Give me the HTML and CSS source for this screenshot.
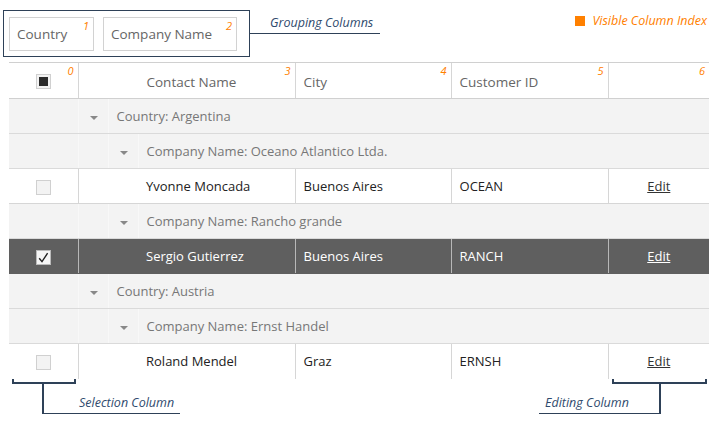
FILE: index.html
```html
<!DOCTYPE html>
<html>
<head>
<meta charset="utf-8">
<link rel="stylesheet" href="styles.css">
</head>
<body>
<div class="top">
  <div class="group-panel">
    <div class="group-item w1">Country<span class="idx">1</span></div>
    <div class="group-item w2">Company Name<span class="idx">2</span></div>
  </div>
  <div class="note-grouping">Grouping Columns</div>
  <div class="legend"><span class="legend-box"></span>Visible Column Index</div>
</div>
<table class="grid">
  <colgroup>
    <col class="c-sel"><col class="c-ind"><col class="c-ind"><col class="c-contact"><col class="c-city"><col class="c-cust"><col class="c-edit">
  </colgroup>
  <thead>
    <tr>
      <th class="sel"><span class="cb cb-ind"><span class="ind-mark"></span></span><span class="idx">0</span></th>
      <th colspan="3" class="hdr contact">Contact Name<span class="idx">3</span></th>
      <th class="hdr">City<span class="idx">4</span></th>
      <th class="hdr">Customer ID<span class="idx">5</span></th>
      <th class="hdr"><span class="idx">6</span></th>
    </tr>
  </thead>
  <tbody>
    <tr class="grp">
      <td></td>
      <td class="arrow-cell"><span class="arrow"></span></td>
      <td colspan="5" class="grp-text">Country: Argentina</td>
    </tr>
    <tr class="grp">
      <td></td><td></td>
      <td class="arrow-cell"><span class="arrow"></span></td>
      <td colspan="4" class="grp-text">Company Name: Oceano Atlantico Ltda.</td>
    </tr>
    <tr class="data">
      <td class="sel"><span class="cb"></span></td>
      <td colspan="2" class="indent"></td>
      <td>Yvonne Moncada</td>
      <td>Buenos Aires</td>
      <td>OCEAN</td>
      <td class="edit"><a>Edit</a></td>
    </tr>
    <tr class="grp">
      <td></td><td></td>
      <td class="arrow-cell"><span class="arrow"></span></td>
      <td colspan="4" class="grp-text">Company Name: Rancho grande</td>
    </tr>
    <tr class="data selected">
      <td class="sel"><span class="cb cb-checked"><svg viewBox="0 0 15 15" width="15" height="15"><path d="M3.2 8.2 L6 11.6 L11.6 3.2" fill="none" stroke="#222" stroke-width="1.4"/></svg></span></td>
      <td colspan="2" class="indent"></td>
      <td>Sergio Gutierrez</td>
      <td>Buenos Aires</td>
      <td>RANCH</td>
      <td class="edit"><a>Edit</a></td>
    </tr>
    <tr class="grp">
      <td></td>
      <td class="arrow-cell"><span class="arrow"></span></td>
      <td colspan="5" class="grp-text">Country: Austria</td>
    </tr>
    <tr class="grp">
      <td></td><td></td>
      <td class="arrow-cell"><span class="arrow"></span></td>
      <td colspan="4" class="grp-text">Company Name: Ernst Handel</td>
    </tr>
    <tr class="data last">
      <td class="sel"><span class="cb"></span></td>
      <td colspan="2" class="indent"></td>
      <td>Roland Mendel</td>
      <td>Graz</td>
      <td>ERNSH</td>
      <td class="edit"><a>Edit</a></td>
    </tr>
  </tbody>
</table>
<div class="bottom">
  <div class="note-left">
    <div class="bracket bracket-sel"></div>
    <div class="stem stem-sel"><span>Selection Column</span></div>
  </div>
  <div class="note-right">
    <div class="bracket bracket-edit"></div>
    <div class="stem stem-edit"><span>Editing Column</span></div>
  </div>
</div>
</body>
</html>
```

FILE: styles.css
```css
html, body {
  margin: 0;
  padding: 0;
  background: #fff;
}
body {
  width: 717px;
  height: 425px;
  overflow: hidden;
  font-family: "Open Sans", "Noto Sans", sans-serif;
  font-size: 13px;
  color: #333;
}
.top {
  height: 62px;
  display: flex;
  align-items: flex-start;
  position: relative;
}
.group-panel {
  margin: 10px 0 0 3px;
  width: 240px;
  height: 45px;
  border: 1px solid #2e4158;
  display: flex;
  align-items: center;
  gap: 9px;
  padding-left: 5px;
  box-sizing: content-box;
}
.group-item {
  position: relative;
  height: 34px;
  border: 1px solid #d2d2d2;
  box-sizing: border-box;
  display: flex;
  align-items: center;
  padding-left: 7px;
  color: #666;
  font-size: 13.5px;
}
.w1 { width: 85px; }
.w2 { width: 134px; }
.idx {
  position: absolute;
  top: 1px;
  right: 4px;
  font-size: 11px;
  font-style: italic;
  color: #ff8000;
  line-height: 13px;
  font-weight: normal;
}
.note-grouping {
  margin-top: 13px;
  width: 110px;
  padding-left: 20px;
  height: 20px;
  border-bottom: 1px solid #2e4158;
  font-style: italic;
  color: #2f4a6d;
  font-size: 12.5px;
  line-height: 20px;
  white-space: nowrap;
}
.legend {
  margin: 11px 0 0 auto;
  margin-right: 10px;
  display: flex;
  align-items: center;
  color: #ff8000;
  font-style: italic;
  font-size: 12.5px;
  line-height: 20px;
  white-space: nowrap;
}
.legend-box {
  width: 10px;
  height: 10px;
  background: #ff8000;
  margin-right: 7px;
}
.grid {
  margin-left: 9px;
  width: 700px;
  border-collapse: collapse;
  table-layout: fixed;
}
.c-sel { width: 69px; }
.c-ind { width: 30px; }
.c-contact { width: 157px; }
.c-city { width: 156px; }
.c-cust { width: 157px; }
.c-edit { width: 101px; }
.grid th, .grid td {
  height: 35px;
  padding: 0 0 0 8px;
  box-sizing: border-box;
  font-weight: normal;
  text-align: left;
  white-space: nowrap;
  border-bottom: 1px solid #d6d6d6;
}
.grid thead th {
  height: 36px;
  border-top: 1px solid #d0d0d0;
  border-bottom: 1px solid #d0d0d0;
  border-left: 1px solid #d6d6d6;
  position: relative;
  color: #666;
  font-size: 13.5px;
  vertical-align: middle;
  padding-top: 2px;
}
.grid thead th:first-child { border-left: none; }
.grid thead th.contact { padding-left: 68px; }
.grid th.sel, .grid td.sel {
  text-align: center;
  padding: 0;
}
.cb {
  display: inline-block;
  width: 15px;
  height: 15px;
  box-sizing: border-box;
  border: 1px solid #d0d0d0;
  background: #f3f3f3;
  vertical-align: middle;
  position: relative;
}
.cb-ind .ind-mark {
  position: absolute;
  left: 2px;
  top: 2px;
  width: 9px;
  height: 9px;
  background: #2b2b2b;
}
.cb-checked {
  background: #f6f6f6;
  border-color: #bbb;
}
.cb-checked svg { position: absolute; left: -1px; top: -1px; }
.grp td {
  background: #f3f3f3;
  color: #777;
  border-bottom: 1px solid #dadada;
  border-left: 1px solid #f8f8f8;
}
.grp td:first-child { border-left: none; }
.grp td.grp-text { padding-left: 8px; }
.arrow-cell { padding: 0 !important; text-align: center !important; }
.arrow {
  display: inline-block;
  width: 0;
  height: 0;
  border-left: 4px solid transparent;
  border-right: 4px solid transparent;
  border-top: 4px solid #888;
  vertical-align: middle;
  margin-left: 1px;
}
.data td {
  border-left: 1px solid #d6d6d6;
  color: #222;
}
.data td:first-child { border-left: none; }
.data td.indent + td { border-left: none; }
.data td.edit {
  text-align: center;
  padding: 0;
}
.edit a {
  text-decoration: underline;
  color: #333;
}
.data.selected td {
  background: #5f5f5f;
  color: #fff;
  border-left-color: #b8b8b8;
  border-bottom-color: #5f5f5f;
}
.data.selected td.indent + td { border-left: none; }
.data.selected td:first-child { border-left: none; }
.data.selected .edit a { color: #fff; }
.data.last td { border-bottom: none; }
.bottom {
  display: flex;
  justify-content: space-between;
  margin-top: 0;
}
.bracket {
  height: 5px;
  border: 1px solid #2e4158;
  border-top: none;
  border-width: 0 2px 2px 2px;
  box-sizing: border-box;
}
.bracket-sel { margin-left: 12px; width: 64px; }
.bracket-edit { margin-right: 10px; width: 95px; margin-left: auto; }
.note-right { display: flex; flex-direction: column; }
.stem {
  height: 30px;
  box-sizing: border-box;
  border-bottom: 1px solid #2e4158;
  font-style: italic;
  color: #2f4a6d;
  font-size: 12.5px;
  display: flex;
  align-items: flex-end;
  white-space: nowrap;
  line-height: 20px;
}
.stem-sel {
  margin-left: 42px;
  width: 138px;
  border-left: 2px solid #2e4158;
  padding-left: 35px;
}
.stem-edit {
  margin-right: 56px;
  width: 122px;
  border-right: 2px solid #2e4158;
  padding-left: 6px;
  align-self: flex-end;
}
```
